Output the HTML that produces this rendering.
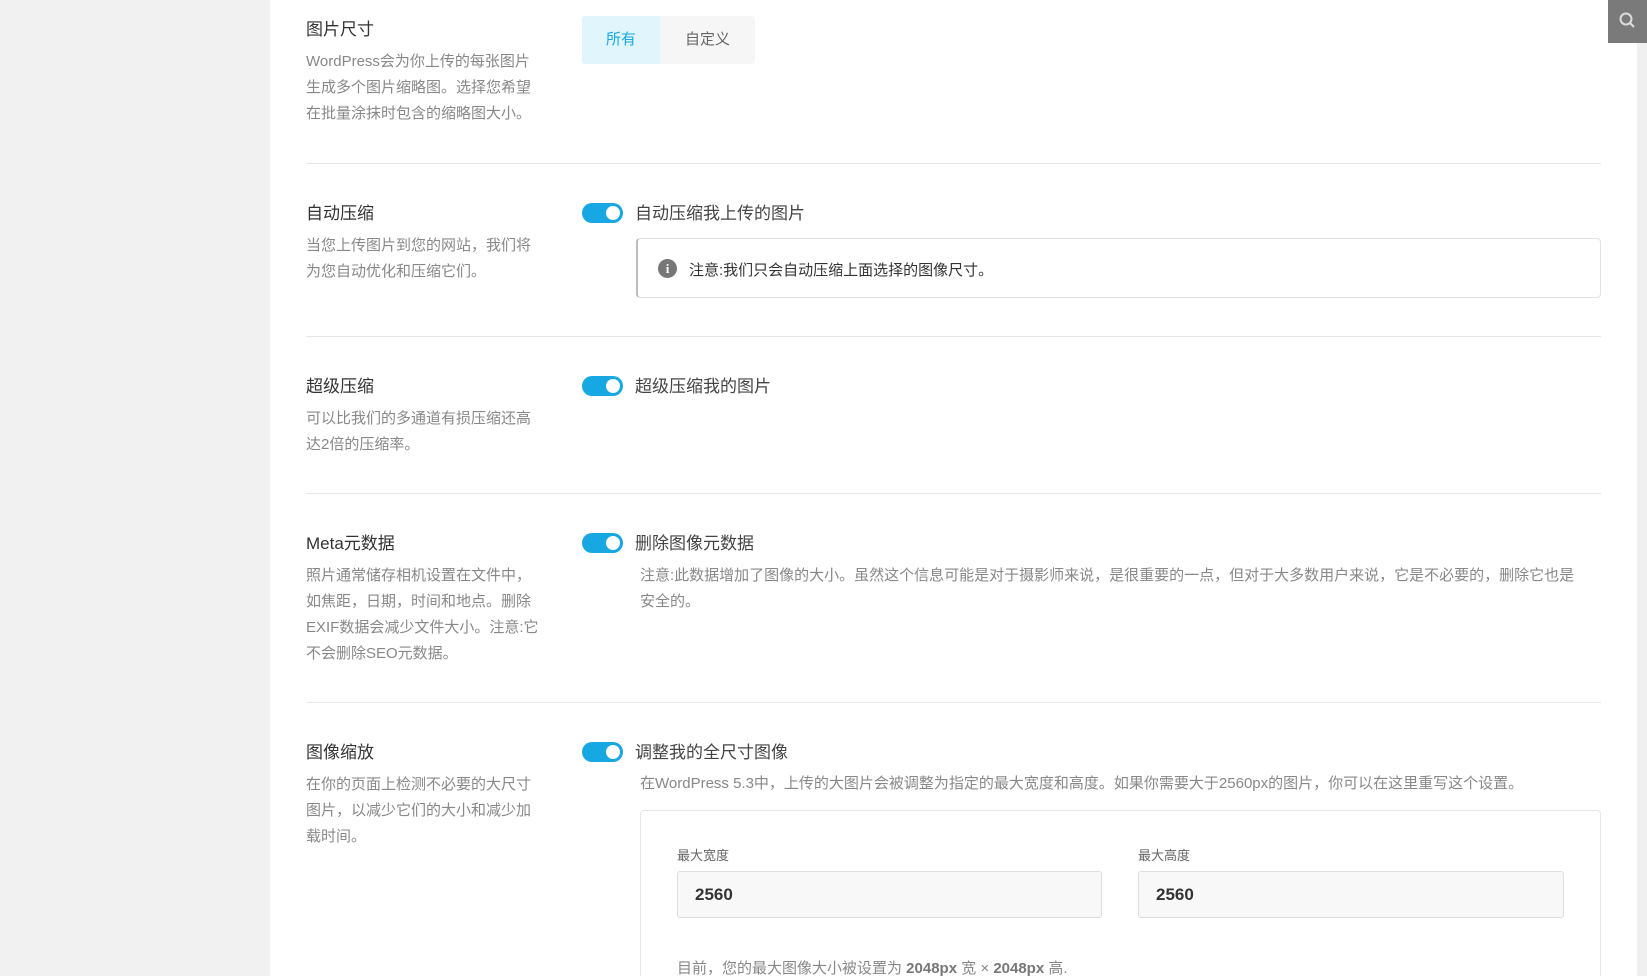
<!DOCTYPE html>
<html><head><meta charset="utf-8"><style>
*{box-sizing:border-box;margin:0;padding:0}
html,body{width:1647px;height:976px;overflow:hidden}
body{background:#fff;font-family:"Liberation Sans","Noto Sans CJK SC",sans-serif;position:relative}
.side{position:absolute;left:0;top:0;width:270px;height:976px;background:#f1f1f1}
.sb{position:absolute;right:0;top:43px;width:10px;height:933px;background:#f0f0f0}
.search{position:absolute;left:1608px;top:0;width:39px;height:43px;background:#7a7a7a}
.a{position:absolute;white-space:nowrap}
.t{font-size:17px;color:#333;left:306px}
.d{font-size:15px;color:#888;line-height:26px;left:306px}
.hr{position:absolute;left:306px;width:1295px;height:1px;background:#e6e6e6}
.tg{position:absolute;left:582px;width:41px;height:20px;border-radius:10px;background:#17a8e3}
.tg:after{content:"";position:absolute;right:3px;top:3px;width:14px;height:14px;border-radius:50%;background:#fff}
.lb{font-size:17px;color:#444;left:635px}
.inp{position:absolute;top:871px;height:47px;border:1px solid #ddd;border-radius:3px;background:#f8f8f8;font-size:17px;color:#333;padding:13px 17px;font-weight:bold}
</style></head><body>
<div class="side"></div>
<div class="search"><svg width="39" height="43" viewBox="0 0 39 43"><circle cx="18" cy="19" r="5.5" fill="none" stroke="#ddd" stroke-width="2"/><path d="M22 23l4 4" stroke="#ddd" stroke-width="2"/></svg></div>
<div class="sb"></div>

<div class="a t" style="top:15px">图片尺寸</div>
<div class="a d" style="top:49px">WordPress会为你上传的每张图片<br>生成多个图片缩略图。选择您希望<br>在批量涂抹时包含的缩略图大小。</div>
<div class="a" style="left:582px;top:16px;width:173px;height:48px;background:#f6f6f6;border-radius:3px"></div>
<div class="a" style="left:582px;top:16px;width:78px;height:48px;background:#e1f5fd;border-radius:3px 0 0 3px;color:#17a8e3;font-size:15px;text-align:center;line-height:48px">所有</div>
<div class="a" style="left:660px;top:16px;width:95px;height:48px;color:#666;font-size:15px;text-align:center;line-height:48px">自定义</div>
<div class="hr" style="top:163px"></div>

<div class="a t" style="top:199px">自动压缩</div>
<div class="a d" style="top:233px">当您上传图片到您的网站，我们将<br>为您自动优化和压缩它们。</div>
<div class="tg" style="top:203px"></div>
<div class="a lb" style="top:199px">自动压缩我上传的图片</div>
<div class="a" style="left:636px;top:238px;width:965px;height:60px;border:1px solid #e2e2e2;border-left:2px solid #bbb;border-radius:4px"></div>
<div class="a" style="left:658px;top:259px;width:19px;height:19px;border-radius:50%;background:#777;color:#fff;font-size:13px;font-weight:bold;text-align:center;line-height:19px;font-family:'Liberation Serif',serif">i</div>
<div class="a" style="left:689px;top:259px;font-size:15px;color:#333">注意:我们只会自动压缩上面选择的图像尺寸。</div>
<div class="hr" style="top:336px"></div>

<div class="a t" style="top:372px">超级压缩</div>
<div class="a d" style="top:406px">可以比我们的多通道有损压缩还高<br>达2倍的压缩率。</div>
<div class="tg" style="top:376px"></div>
<div class="a lb" style="top:372px">超级压缩我的图片</div>
<div class="hr" style="top:493px"></div>

<div class="a t" style="top:529px">Meta元数据</div>
<div class="a d" style="top:563px">照片通常储存相机设置在文件中，<br>如焦距，日期，时间和地点。删除<br>EXIF数据会减少文件大小。注意:它<br>不会删除SEO元数据。</div>
<div class="tg" style="top:533px"></div>
<div class="a lb" style="top:529px">删除图像元数据</div>
<div class="a d" style="left:640px;top:563px">注意:此数据增加了图像的大小。虽然这个信息可能是对于摄影师来说，是很重要的一点，但对于大多数用户来说，它是不必要的，删除它也是<br>安全的。</div>
<div class="hr" style="top:702px"></div>

<div class="a t" style="top:738px">图像缩放</div>
<div class="a d" style="top:772px">在你的页面上检测不必要的大尺寸<br>图片，以减少它们的大小和减少加<br>载时间。</div>
<div class="tg" style="top:742px"></div>
<div class="a lb" style="top:738px">调整我的全尺寸图像</div>
<div class="a d" style="left:640px;top:771px">在WordPress 5.3中，上传的大图片会被调整为指定的最大宽度和高度。如果你需要大于2560px的图片，你可以在这里重写这个设置。</div>
<div class="a" style="left:640px;top:810px;width:961px;height:200px;border:1px solid #e6e6e6;border-radius:4px"></div>
<div class="a" style="left:677px;top:845px;font-size:13px;color:#666">最大宽度</div>
<div class="a" style="left:1138px;top:845px;font-size:13px;color:#666">最大高度</div>
<div class="inp" style="left:677px;width:425px">2560</div>
<div class="inp" style="left:1138px;width:426px">2560</div>
<div class="a" style="left:677px;top:957px;font-size:15px;color:#888">目前，您的最大图像大小被设置为 <b style="color:#777">2048px</b> 宽 × <b style="color:#777">2048px</b> 高.</div>
</body></html>
